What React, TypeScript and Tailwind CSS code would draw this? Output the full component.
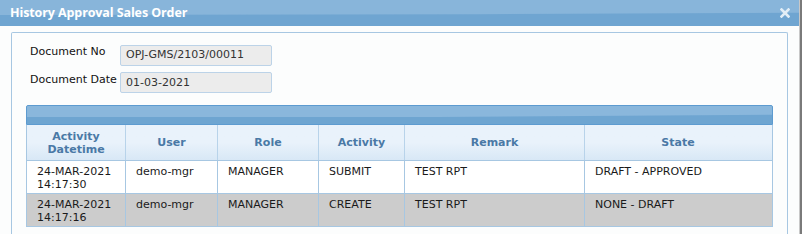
const rows = [
  { date: "24-MAR-2021", time: "14:17:30", user: "demo-mgr", role: "MANAGER", activity: "SUBMIT", remark: "TEST RPT", state: "DRAFT - APPROVED" },
  { date: "24-MAR-2021", time: "14:17:16", user: "demo-mgr", role: "MANAGER", activity: "CREATE", remark: "TEST RPT", state: "NONE - DRAFT" },
];

const cols = ["w-[98px]", "w-[92px]", "w-[101px]", "w-[86px]", "w-[180px]", "w-[187px]"];

export default function App() {
  return (
    <div className="flex h-[234px] w-[802px] overflow-hidden bg-[#fcfdfd] font-['DejaVu_Sans',sans-serif] text-[11px] text-[#1a1a1a]">
      <div className="flex w-[799px] flex-col">
        {/* title bar */}
        <div className="relative flex h-[26px] items-center overflow-hidden bg-[#6fa5d1] pl-[10px]">
          <div className="absolute inset-x-0 top-0 h-[15px] bg-[#88b5da] [clip-path:polygon(0_0,100%_0,100%_85%,60%_95%,0_100%)]" />
          <span className="relative font-['Open_Sans',sans-serif] text-[12.5px] font-bold tracking-[-0.1px] text-white">
            History Approval Sales Order
          </span>
          <svg className="absolute right-[9px] top-[8px]" width="10" height="10" viewBox="0 0 10 10">
            <path d="M1.5 1.5 L8.5 8.5 M8.5 1.5 L1.5 8.5" stroke="#e2edf6" strokeWidth="2.6" strokeLinecap="square" />
          </svg>
        </div>

        {/* body */}
        <div className="flex-1 pl-[11px] pr-[11px] pt-[6px]">
          <div className="h-full rounded-t-[2px] border border-b-0 border-[#a7c7e2] bg-[#fcfdfd] pl-[14px] pr-[15px] pt-[11px]">
            <div className="flex flex-col gap-[5px] pl-[4px]">
              <div className="flex items-center">
                <span className="w-[90px] pb-[6px] text-[#111]">Document No</span>
                <div className="flex h-[21px] w-[152px] items-center rounded-[2px] border border-[#bcd3e8] bg-[#ececec] pl-[5px] text-[#333]">
                  OPJ-GMS/2103/00011
                </div>
              </div>
              <div className="flex items-center">
                <span className="w-[90px] pb-[6px] text-[#111]">Document Date</span>
                <div className="flex h-[21px] w-[152px] items-center rounded-[2px] border border-[#bcd3e8] bg-[#ececec] pl-[5px] text-[#333]">
                  01-03-2021
                </div>
              </div>
            </div>

            {/* grid */}
            <div className="mt-[11px] w-[747px]">
              <div className="relative h-[20px] overflow-hidden rounded-t-[2px] border border-[#5d9bd0] bg-[#6ea5d1]">
                <div className="absolute inset-x-0 top-0 h-[11px] bg-[#8ab7dc] [clip-path:polygon(0_0,100%_0,100%_80%,55%_100%,0_100%)]" />
              </div>
              <div className="border-x border-b border-[#a7c7e2]">
                <div className="flex h-[35px] bg-gradient-to-b from-[#e9f2fb] via-[#e9f2fb] to-[#d8e8f6] font-bold text-[#4a79a6]">
                  {["Activity Datetime", "User", "Role", "Activity", "Remark", "State"].map((h, i) => (
                    <div
                      key={h}
                      className={`${cols[i]} flex shrink-0 items-center justify-center px-[20px] text-center leading-[13px] ${i > 0 ? "border-l border-[#b8d3ea]" : ""}`}
                    >
                      {h}
                    </div>
                  ))}
                </div>
                {rows.map((r, idx) => (
                  <div
                    key={r.time}
                    className={`flex h-[33px] border-t border-[#a7c7e2] leading-[13px] ${idx === 1 ? "bg-[#cccccc]" : "bg-white"}`}
                  >
                    <div className={`${cols[0]} shrink-0 pl-[10px] pt-[4px]`}>
                      {r.date}
                      <br />
                      {r.time}
                    </div>
                    <div className={`${cols[1]} shrink-0 border-l border-[#a7c7e2] pl-[10px] pt-[4px]`}>{r.user}</div>
                    <div className={`${cols[2]} shrink-0 border-l border-[#a7c7e2] pl-[10px] pt-[4px]`}>{r.role}</div>
                    <div className={`${cols[3]} shrink-0 border-l border-[#a7c7e2] pl-[10px] pt-[4px]`}>{r.activity}</div>
                    <div className={`${cols[4]} shrink-0 border-l border-[#a7c7e2] pl-[10px] pt-[4px]`}>{r.remark}</div>
                    <div className={`${cols[5]} shrink-0 border-l border-[#a7c7e2] pl-[10px] pt-[4px]`}>{r.state}</div>
                  </div>
                ))}
              </div>
            </div>
          </div>
        </div>
      </div>
      <div className="w-[1px] bg-[#c8c8c8]" />
      <div className="w-[2px] bg-[#7a7a7a]" />
    </div>
  );
}
